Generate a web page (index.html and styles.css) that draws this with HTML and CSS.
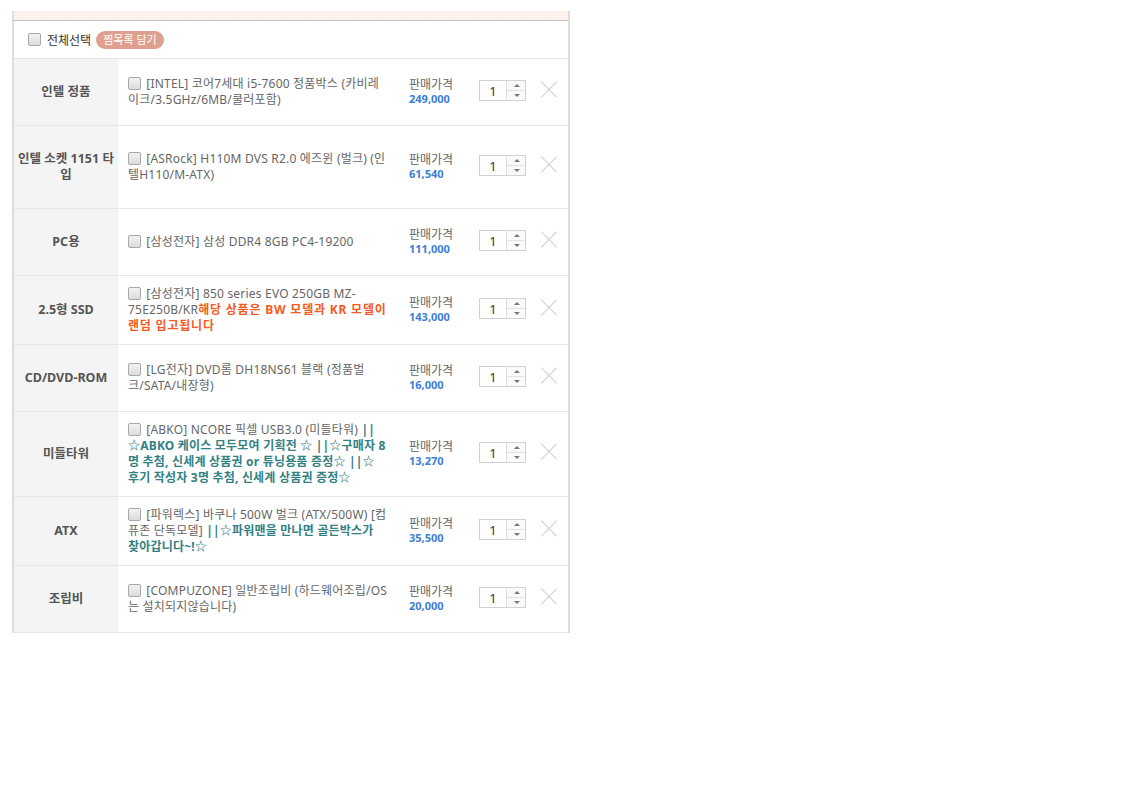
FILE: index.html
```html
<!DOCTYPE html>
<html lang="ko">
<head>
  <meta charset="UTF-8">
  <title>장바구니</title>
  <link rel="stylesheet" href="styles.css">
</head>
<body>
  <div class="cart">
    <div class="cart-top"></div>
    <div class="cart-head">
      <label class="all-check"><input type="checkbox" class="chk"> 전체선택</label>
      <button class="btn-wish">찜목록 담기</button>
    </div>

    <table class="cart-list">
      <colgroup>
        <col class="c-cat"><col class="c-name"><col class="c-price"><col class="c-qty"><col class="c-del">
      </colgroup>
      <tr>
        <th>인텔 정품</th>
        <td class="name"><input type="checkbox" class="chk"> [INTEL] 코어7세대 i5-7600 정품박스 (카비레이크/3.5GHz/6MB/쿨러포함)</td>
        <td class="price"><span>판매가격</span><b>249,000</b></td>
        <td class="qty"><span class="spin"><span class="num">1</span><span class="arr"><i class="up"></i><i class="dn"></i></span></span></td>
        <td class="del"><span class="x"></span></td>
      </tr>
      <tr>
        <th>인텔 소켓 1151 타입</th>
        <td class="name"><input type="checkbox" class="chk"> [ASRock] H110M DVS R2.0 에즈윈 (벌크) (인텔H110/M-ATX)</td>
        <td class="price"><span>판매가격</span><b>61,540</b></td>
        <td class="qty"><span class="spin"><span class="num">1</span><span class="arr"><i class="up"></i><i class="dn"></i></span></span></td>
        <td class="del"><span class="x"></span></td>
      </tr>
      <tr>
        <th>PC용</th>
        <td class="name"><input type="checkbox" class="chk"> [삼성전자] 삼성 DDR4 8GB PC4-19200</td>
        <td class="price"><span>판매가격</span><b>111,000</b></td>
        <td class="qty"><span class="spin"><span class="num">1</span><span class="arr"><i class="up"></i><i class="dn"></i></span></span></td>
        <td class="del"><span class="x"></span></td>
      </tr>
      <tr>
        <th>2.5형 SSD</th>
        <td class="name"><input type="checkbox" class="chk"> [삼성전자] 850 series EVO 250GB MZ-75E250B/KR<em class="red">해당 상품은 BW 모델과 KR 모델이 랜덤 입고됩니다</em></td>
        <td class="price"><span>판매가격</span><b>143,000</b></td>
        <td class="qty"><span class="spin"><span class="num">1</span><span class="arr"><i class="up"></i><i class="dn"></i></span></span></td>
        <td class="del"><span class="x"></span></td>
      </tr>
      <tr>
        <th>CD/DVD-ROM</th>
        <td class="name"><input type="checkbox" class="chk"> [LG전자] DVD롬 DH18NS61 블랙 (정품벌크/SATA/내장형)</td>
        <td class="price"><span>판매가격</span><b>16,000</b></td>
        <td class="qty"><span class="spin"><span class="num">1</span><span class="arr"><i class="up"></i><i class="dn"></i></span></span></td>
        <td class="del"><span class="x"></span></td>
      </tr>
      <tr>
        <th>미들타워</th>
        <td class="name"><input type="checkbox" class="chk"> [ABKO] NCORE 픽셀 USB3.0 (미들타워) <em class="teal">||<br>☆ABKO 케이스 모두모여 기획전 ☆ ||☆구매자 8<br>명 추첨, 신세계 상품권 or 튜닝용품 증정☆ ||☆<br>후기 작성자 3명 추첨, 신세계 상품권 증정☆</em></td>
        <td class="price"><span>판매가격</span><b>13,270</b></td>
        <td class="qty"><span class="spin"><span class="num">1</span><span class="arr"><i class="up"></i><i class="dn"></i></span></span></td>
        <td class="del"><span class="x"></span></td>
      </tr>
      <tr>
        <th>ATX</th>
        <td class="name"><input type="checkbox" class="chk"> [파워렉스] 바쿠나 500W 벌크 (ATX/500W) [컴퓨존 단독모델] <em class="teal">||☆파워맨을 만나면 골든박스가<br>찾아갑니다~!☆</em></td>
        <td class="price"><span>판매가격</span><b>35,500</b></td>
        <td class="qty"><span class="spin"><span class="num">1</span><span class="arr"><i class="up"></i><i class="dn"></i></span></span></td>
        <td class="del"><span class="x"></span></td>
      </tr>
      <tr>
        <th>조립비</th>
        <td class="name"><input type="checkbox" class="chk"> [COMPUZONE] 일반조립비 (하드웨어조립/OS는 설치되지않습니다)</td>
        <td class="price"><span>판매가격</span><b>20,000</b></td>
        <td class="qty"><span class="spin"><span class="num">1</span><span class="arr"><i class="up"></i><i class="dn"></i></span></span></td>
        <td class="del"><span class="x"></span></td>
      </tr>
    </table>
  </div>
</body>
</html>
```

FILE: styles.css
```css
body {
  margin: 0;
  background: #fff;
  font-family: "Noto Sans", "Noto Sans CJK KR", sans-serif;
  font-size: 12px;
  color: #666;
}
.cart {
  width: 554px;
  margin: 11px 0 0 12px;
  border-left: 2px solid #ddd;
  border-right: 2px solid #ddd;
}
.cart-top {
  height: 9px;
  background-color: #fdf3ef;
  background-image: radial-gradient(#f6e2da 30%, transparent 31%);
  background-size: 3px 3px;
  border-bottom: 1px solid #c9c2c0;
}
.cart-head {
  display: flex;
  align-items: center;
  height: 37px;
  padding-left: 14px;
  border-bottom: 1px solid #e6e6e6;
}
.all-check {
  display: flex;
  align-items: center;
  color: #333;
  font-size: 12px;
}
.all-check .chk {
  margin: 0 6px 0 0;
}
.btn-wish {
  margin-left: 5px;
  height: 18px;
  padding: 0 7px;
  border: none;
  border-radius: 9px;
  background: #dfa090;
  color: #fff;
  font-family: inherit;
  font-size: 11px;
  line-height: 18px;
}
.chk {
  -webkit-appearance: none;
  appearance: none;
  width: 13px;
  height: 13px;
  margin: 0 2px 0 0;
  border: 1px solid #a8a8a8;
  border-radius: 2px;
  background: linear-gradient(#f2f2f2, #dcdcdc);
  vertical-align: -2px;
}
.cart-list {
  width: 100%;
  border-collapse: collapse;
  table-layout: fixed;
}
.c-cat { width: 104px; }
.c-name { width: 287px; }
.c-price { width: 70px; }
.c-qty { width: 62px; }
.cart-list tr {
  border-bottom: 1px solid #e6e6e6;
}
.cart-list th {
  padding: 25px 2px;
  background: #f4f4f4;
  color: #555;
  font-size: 12.5px;
  line-height: 16px;
  font-weight: bold;
  text-align: center;
  vertical-align: middle;
}
.cart-list td {
  vertical-align: middle;
}
.name {
  padding: 10px 15px 10px 10px;
  line-height: 16px;
  letter-spacing: 0.2px;
}
.name em {
  font-style: normal;
  font-weight: bold;
}
.red {
  color: #f45a22;
  letter-spacing: 0.8px;
}
.teal {
  color: #338183;
  letter-spacing: 0.2px;
}
.price {
  padding-left: 4px;
  padding-bottom: 2px;
}
.price span {
  display: block;
  line-height: 14px;
}
.price b {
  display: block;
  color: #3b7ed8;
  font-size: 11px;
  line-height: 14px;
}
.qty {
  padding-left: 4px;
  padding-bottom: 5px;
}
.spin {
  display: flex;
  width: 45px;
  height: 19px;
  border: 1px solid #d2d2d2;
}
.num {
  width: 26px;
  color: #333;
  font-size: 13px;
  line-height: 20px;
  text-align: center;
}
.arr {
  flex: 1;
  display: flex;
  flex-direction: column;
  border-left: 1px solid #ddd;
  background: #fafafa;
}
.arr i {
  flex: 1;
  position: relative;
}
.arr .up {
  border-bottom: 1px solid #e2e2e2;
}
.arr i::after {
  content: "";
  position: absolute;
  left: 7px;
  top: 3px;
  border-left: 3px solid transparent;
  border-right: 3px solid transparent;
}
.arr .up::after { border-bottom: 3px solid #777; }
.arr .dn::after { border-top: 3px solid #777; }
.del {
  padding-left: 4px;
  padding-bottom: 5px;
}
.x {
  display: block;
  position: relative;
  width: 16px;
  height: 16px;
}
.x::before, .x::after {
  content: "";
  position: absolute;
  left: -3px;
  top: 7px;
  width: 22px;
  height: 1px;
  background: #cfcfcf;
  transform: rotate(45deg);
}
.x::after {
  transform: rotate(-45deg);
}
```
